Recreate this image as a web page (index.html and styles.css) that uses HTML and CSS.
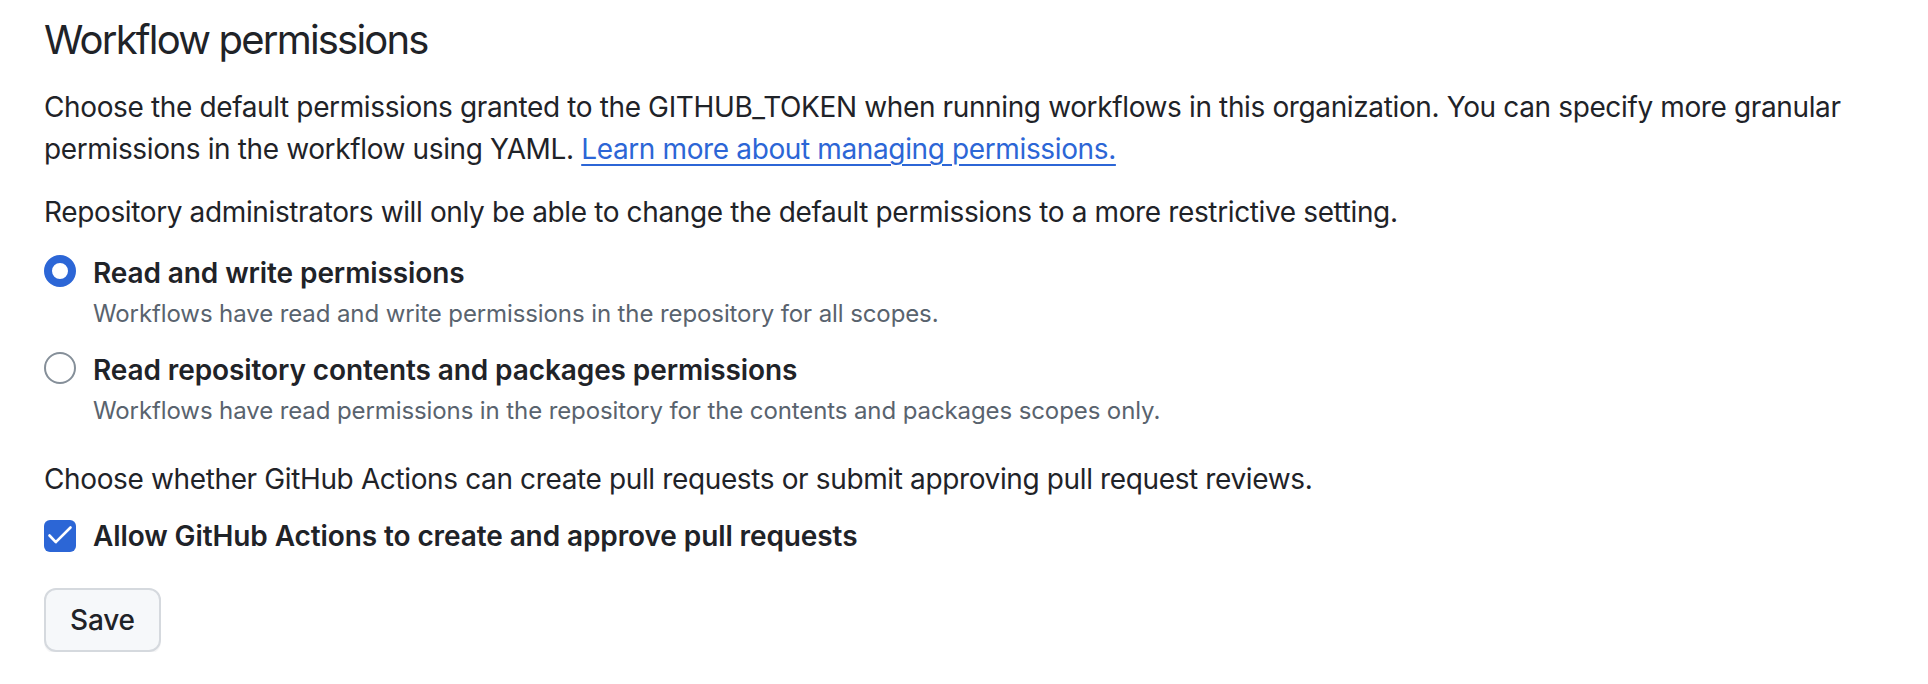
FILE: index.html
```html
<!DOCTYPE html>
<html lang="en">
<head>
<meta charset="utf-8">
<title>Workflow permissions</title>
<link rel="stylesheet" href="styles.css">
</head>
<body>
<main class="page">
  <h2 class="heading">Workflow permissions</h2>
  <p class="text">Choose the default permissions granted to the GITHUB_TOKEN when running workflows in this organization. You can specify more granular permissions in the workflow using YAML. <a class="link" href="#">Learn more about managing permissions.</a></p>
  <p class="text text-gap">Repository administrators will only be able to change the default permissions to a more restrictive setting.</p>

  <div class="options">
    <div class="option">
      <span class="radio radio-checked"></span>
      <div class="option-body">
        <div class="option-label">Read and write permissions</div>
        <div class="option-desc">Workflows have read and write permissions in the repository for all scopes.</div>
      </div>
    </div>
    <div class="option">
      <span class="radio"></span>
      <div class="option-body">
        <div class="option-label">Read repository contents and packages permissions</div>
        <div class="option-desc">Workflows have read permissions in the repository for the contents and packages scopes only.</div>
      </div>
    </div>
  </div>

  <p class="text text-section">Choose whether GitHub Actions can create pull requests or submit approving pull request reviews.</p>
  <div class="check-row">
    <span class="checkbox">
      <svg viewBox="0 0 32 32" width="32" height="32" aria-hidden="true"><path d="M5.5 15.5 11.8 22.2 26.5 7.5" fill="none" stroke="#fff" stroke-width="2.6" stroke-linecap="round" stroke-linejoin="round"/></svg>
    </span>
    <span class="option-label">Allow GitHub Actions to create and approve pull requests</span>
  </div>

  <button class="btn" type="button">Save</button>
</main>
</body>
</html>
```

FILE: styles.css
```css
* { box-sizing: border-box; }
html, body { margin: 0; padding: 0; background: #ffffff; }
body {
  font-family: Inter, "Noto Sans", "Liberation Sans", sans-serif;
  color: #1f2328;
  font-size: 28px;
  line-height: 42px;
  letter-spacing: -0.37px;
}
.page {
  padding: 10px 44px 0 44px;
  display: flex;
  flex-direction: column;
  align-items: flex-start;
}
.heading {
  margin: 0;
  font-size: 40px;
  line-height: 60px;
  font-weight: 400;
  letter-spacing: -1.8px;
}
.text { margin: 16px 0 0 0; }
.text-gap { margin-top: 21px; }
.link {
  color: #2c66d6;
  text-decoration: underline;
  text-underline-offset: 5px;
  text-decoration-thickness: 2px;
}
.options {
  margin-top: 19px;
  display: flex;
  flex-direction: column;
  gap: 17px;
}
.option {
  display: flex;
  align-items: flex-start;
  gap: 17px;
}
.radio {
  flex: none;
  width: 32px;
  height: 32px;
  margin-top: 3px;
  border-radius: 50%;
  border: 2px solid #858f99;
  background: #fff;
}
.radio-checked {
  border: 8px solid #2c66d6;
}
.option-body { display: flex; flex-direction: column; }
.option-label { font-weight: 600; letter-spacing: -0.1px; }
.option-desc {
  margin-top: 2px;
  font-size: 24px;
  line-height: 36px;
  color: #59636e;
  letter-spacing: -0.1px;
}
.text-section { margin-top: 29px; }
.check-row {
  margin-top: 15px;
  display: flex;
  align-items: flex-start;
  gap: 17px;
}
.checkbox {
  flex: none;
  width: 32px;
  height: 32px;
  margin-top: 5px;
  border-radius: 6px;
  background: #2c66d6;
  display: flex;
  align-items: center;
  justify-content: center;
}
.btn {
  margin-top: 31px;
  height: 64px;
  padding: 0 24px;
  font-family: inherit;
  font-size: 28px;
  font-weight: 500;
  letter-spacing: -0.2px;
  color: #1f2328;
  background: #f6f8fa;
  border: 2px solid #d5d9de;
  border-radius: 12px;
  box-shadow: 0 2px 0 rgba(31, 35, 40, 0.04);
}
```
